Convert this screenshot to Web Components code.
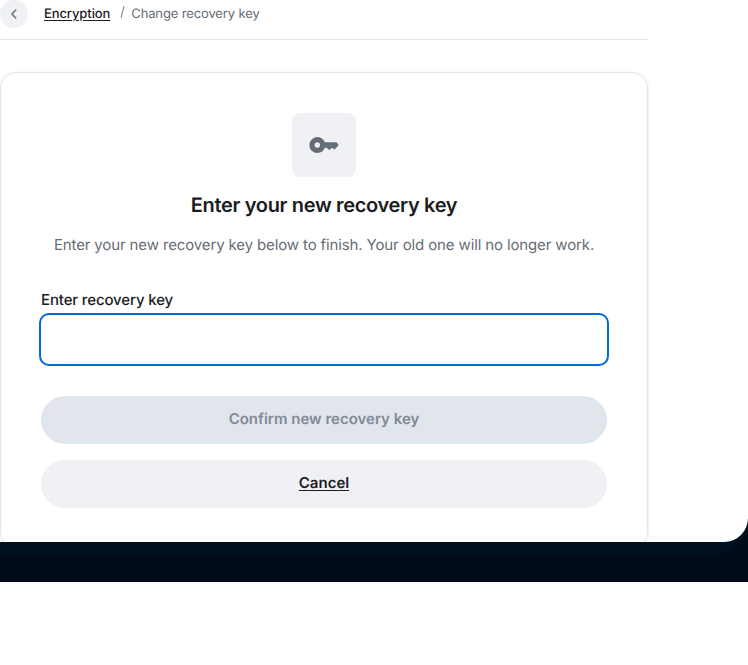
<!DOCTYPE html>
<html lang="en">
<head>
<meta charset="utf-8">
<title>Change recovery key</title>
<style>
html, body { margin: 0; background: #fff; overflow: hidden; font-family: Inter, "Liberation Sans", sans-serif; color: #1b1d22; text-rendering: geometricPrecision; }
</style>
</head>
<body>
<settings-dialog>
  <nav-trail><a slot="parent">Encryption</a><span>Change recovery key</span></nav-trail>
  <encryption-card>
    <span slot="title">Enter your new recovery key</span>
    <span slot="description">Enter your new recovery key below to finish. Your old one will no longer work.</span>
    <key-field>Enter recovery key</key-field>
    <pill-button disabled>Confirm new recovery key</pill-button>
    <pill-button>Cancel</pill-button>
  </encryption-card>
</settings-dialog>
<script>
function define(name, html) {
  const template = document.createElement('template');
  template.innerHTML = html;
  customElements.define(name, class extends HTMLElement {
    constructor() {
      super();
      this.attachShadow({ mode: 'open' }).append(template.content.cloneNode(true));
    }
  });
}

define('settings-dialog', `
<style>
  :host { display: block; height: 582px; background: linear-gradient(#020b18 581px, #010713 581px); overflow: hidden; }
  .halo { height: 554px; background: #001122; border-bottom-right-radius: 36px; }
  .panel { height: 542px; background: #fff; border-bottom-right-radius: 24px; overflow: hidden; }
  .content { width: 648px; }
</style>
<div class="halo"><div class="panel"><div class="content"><slot></slot></div></div></div>`);

define('nav-trail', `
<style>
  :host { display: flex; align-items: flex-start; height: 39px; border-bottom: 1px solid #e1e3e8; font-size: 13px; line-height: 18px; color: #656d77; }
  .back { display: grid; place-items: center; width: 28px; height: 28px; border-radius: 50%; background: #f0f1f5; }
  .parent { margin: 5px 0 0 16px; color: #1b1d22; font-weight: 500; letter-spacing: -.1px; text-decoration: underline; text-underline-offset: 2px; }
  .slash { width: 1px; height: 12px; margin: 6px 8px 0 12px; background: #737b86; transform: skewX(-14deg); }
  .current { margin-top: 5px; letter-spacing: -.13px; }
</style>
<span class="back"><svg width="20" height="20" viewBox="0 0 24 24" fill="#747c87"><path d="m13.3 17.3-4.6-4.6a.9.9 0 0 1-.213-.325A1.1 1.1 0 0 1 8.425 12q0-.2.062-.375A.9.9 0 0 1 8.7 11.3l4.6-4.6a.95.95 0 0 1 .7-.275q.425 0 .7.275a.95.95 0 0 1 .275.7.95.95 0 0 1-.275.7L10.8 12l3.9 3.9a.95.95 0 0 1 .275.7.95.95 0 0 1-.275.7.95.95 0 0 1-.7.275.95.95 0 0 1-.7-.275"/></svg></span>
<span class="parent"><slot name="parent"></slot></span>
<span class="slash"></span>
<span class="current"><slot></slot></span>`);

define('encryption-card', `
<style>
  :host { display: flex; flex-direction: column; align-items: stretch; box-sizing: border-box; height: 476px; margin-top: 32px; padding: 40px 40px 0; border: 1px solid #e1e6ec; border-radius: 16px; box-shadow: 0 1px 3px rgba(27,29,34,.13); }
  .icon { flex: none; display: grid; place-items: center; align-self: center; width: 64px; height: 64px; border-radius: 8px; background: #f0f1f5; color: #656d77; }
  .title { margin-top: 14px; text-align: center; font-size: 20px; line-height: 28px; font-weight: 600; letter-spacing: -.34px; }
  .description { margin-top: 15px; text-align: center; font-size: 15px; line-height: 22px; letter-spacing: -.13px; white-space: nowrap; color: #656d77; }
</style>
<div class="icon"><svg width="32" height="32" viewBox="0 0 24 24" fill="currentColor" fill-rule="evenodd"><path d="M7 14a2 2 0 1 1 0-4 2 2 0 0 1 0 4m0 4a6 6 0 1 1 5.65-8H21q.4 0 .7.3l.8.9q.6.7.05 1.4l-2 2.3q-.65.65-1.4.05l-1.15-.85-1.45 1.3q-.55.5-1.1 0L14 14.1h-1.4A6 6 0 0 1 7 18"/></svg></div>
<div class="title"><slot name="title"></slot></div>
<div class="description"><slot name="description"></slot></div>
<slot></slot>`);

define('key-field', `
<style>
  :host { display: block; flex: none; margin-top: 33px; font-size: 15px; line-height: 22px; font-weight: 500; letter-spacing: -.13px; }
  .box { box-sizing: border-box; height: 53px; margin: 2px -2px 14px; border: 2px solid #0467dd; border-radius: 10px; }
</style>
<div><slot></slot></div><div class="box"></div>`);

define('pill-button', `
<style>
  :host { display: block; box-sizing: border-box; height: 48px; flex: none; margin-top: 16px; padding-top: 12px; border-radius: 24px; background: #f0f1f5; text-align: center; font-size: 15px; line-height: 22px; font-weight: 600; text-decoration: underline; text-underline-offset: 2px; }
  :host([disabled]) { background: #e1e6ec; color: #818a95; text-decoration: none; }
</style>
<slot></slot>`);
</script>
</body>
</html>
